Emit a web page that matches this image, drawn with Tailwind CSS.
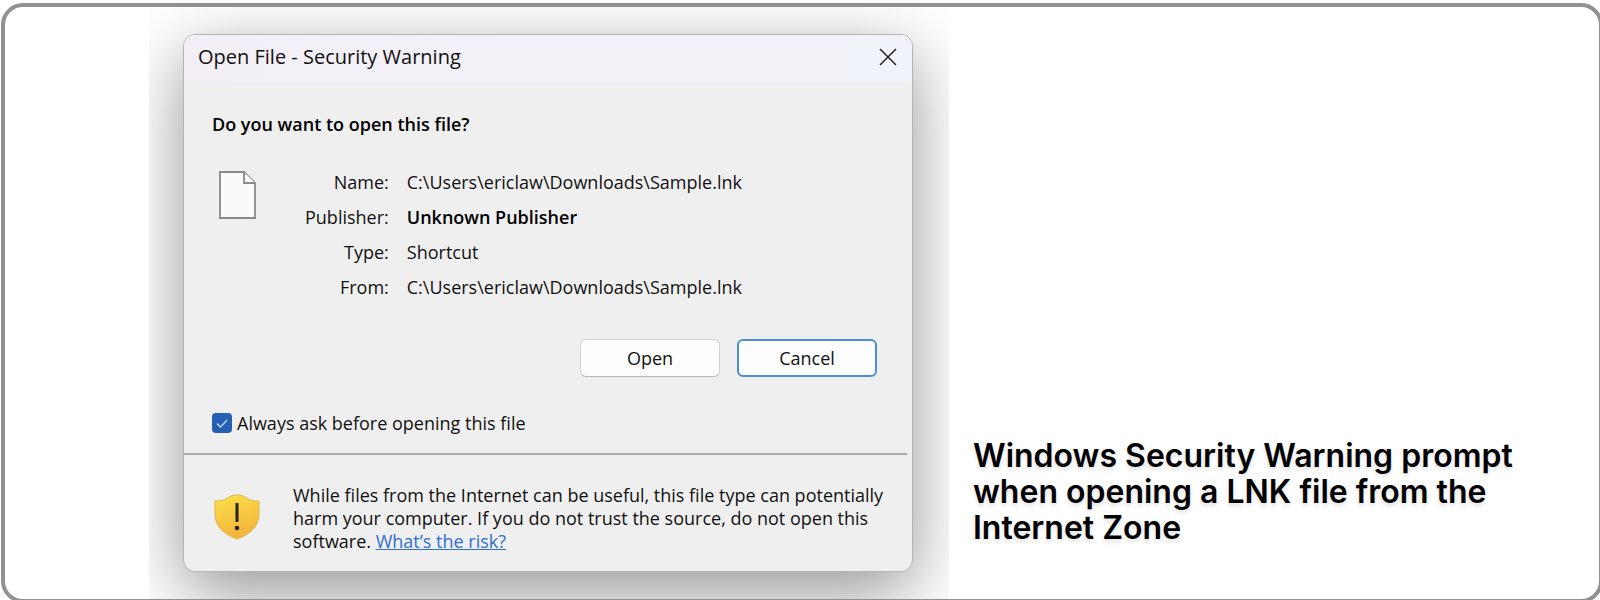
<!DOCTYPE html>
<html lang="en">

<head>
    <meta charset="UTF-8">
    <meta name="viewport" content="width=device-width, initial-scale=1.0">
    <title>Open File - Security Warning</title>
    <script src="https://cdn.jsdelivr.net/npm/@tailwindcss/browser@4"></script>
</head>

<body class="bg-white h-screen overflow-hidden pt-[3px] pl-px">
    <!-- Rounded frame, runs slightly past the right and bottom edges -->
    <figure
        class="flex h-screen -mr-[3px] pl-36 border-4 border-[#919191] rounded-[22px] overflow-hidden">

        <!-- Dialog and its shadow -->
        <div class="w-full max-w-[800px] overflow-hidden pl-[34px] pr-9 pt-[27px]">
            <section role="dialog" aria-labelledby="dialog-title"
                class="font-['Open_Sans','Noto_Sans',sans-serif] text-[18px] leading-6 text-[#111] bg-[#efefef] border border-[#b4b4b4] rounded-xl overflow-hidden shadow-[0_20px_68px_rgba(0,0,0,0.42)]">
                <header
                    class="flex items-center justify-between h-[47px] pl-3.5 pr-[15px] pb-1 bg-linear-to-r from-[#f4eff7] to-[#f0f3f9]">
                    <h1 id="dialog-title" class="text-[20px]">Open File - Security Warning</h1>
                    <button type="button" aria-label="Close">
                        <svg class="size-[18px]" viewBox="0 0 18 18" fill="none" stroke="#222" stroke-width="1.5">
                            <path d="M1 1l16 16M17 1L1 17" />
                        </svg>
                    </button>
                </header>

                <div class="pl-7 pr-[35px] pt-[30px] pb-[18px]">
                    <h2 class="font-semibold text-black">Do you want to open this file?</h2>

                    <div class="flex pt-7">
                        <svg class="w-[37px] h-12 ml-[7px] mt-[7px] shrink-0" viewBox="0 0 37 48" fill="#fafafa" stroke="#8a8a86"
                            stroke-width="1.8">
                            <path d="M1 1h24l11 11v35H1z" />
                            <path d="M25 1v11h11" />
                        </svg>
                        <table class="ml-[49px]">
                            <tbody>
                                <tr class="h-[35px]">
                                    <th scope="row" class="font-normal text-right pr-[18px]">Name:</th>
                                    <td>C:\Users\ericlaw\Downloads\Sample.lnk</td>
                                </tr>
                                <tr class="h-[35px]">
                                    <th scope="row" class="font-normal text-right pr-[18px]">Publisher:</th>
                                    <td class="font-semibold text-black">Unknown Publisher</td>
                                </tr>
                                <tr class="h-[35px]">
                                    <th scope="row" class="font-normal text-right pr-[18px]">Type:</th>
                                    <td>Shortcut</td>
                                </tr>
                                <tr class="h-[35px]">
                                    <th scope="row" class="font-normal text-right pr-[18px]">From:</th>
                                    <td>C:\Users\ericlaw\Downloads\Sample.lnk</td>
                                </tr>
                            </tbody>
                        </table>
                    </div>

                    <div class="flex justify-end gap-[17px] pt-[35px]">
                        <button type="button"
                            class="w-[140px] h-[38px] bg-[#fdfdfd] border border-[#d2d2d2] border-b-[#b8b8b8] rounded-md">Open</button>
                        <button type="button"
                            class="w-[140px] h-[38px] bg-[#fdfdfd] border-2 border-[#4a90d9] rounded-md">Cancel</button>
                    </div>

                    <label class="flex items-center gap-[5px] pt-[34px]">
                        <span class="grid shrink-0">
                            <input type="checkbox" checked
                                class="appearance-none col-start-1 row-start-1 size-5 rounded-[4px] bg-[#2560b4]">
                            <svg class="col-start-1 row-start-1 size-5 pointer-events-none" viewBox="0 0 20 20" fill="none"
                                stroke="#c8daf2" stroke-width="1.3">
                                <path d="M5 10.5l3.5 3.5L15 7" />
                            </svg>
                        </span>
                        Always ask before opening this file
                    </label>
                </div>

                <hr class="border-t-2 border-[#ababab] mr-[5px]">

                <footer class="flex items-start pl-[30px] pr-6 pt-[29px] pb-[18px]">
                    <svg class="size-[46px] mt-[10px] shrink-0" viewBox="0 0 46 46">
                        <defs>
                            <linearGradient id="shield" x1="0" y1="0" x2="0.3" y2="1">
                                <stop offset="0" stop-color="#fbe14a" />
                                <stop offset="1" stop-color="#f3b53c" />
                            </linearGradient>
                        </defs>
                        <path fill="url(#shield)" stroke="#e0b440"
                            d="M23 1c5 0 7.500 1.500 10 3.500C36 6.500 40 7 45 7v12c0 14-9 21-22 26C10 40 1 33 1 19V7c5 0 9-.5 12-2.500C15.500 2.500 18 1 23 1z" />
                        <path stroke="#222" stroke-width="3" d="M23 9v19" />
                        <circle cx="23" cy="34" r="2.300" fill="#222" />
                    </svg>
                    <p class="pl-[33px] leading-[23px]">While files from the Internet can be useful, this file type can
                        potentially<br>harm your computer. If you do not trust the source, do not open this<br>software. <a
                            href="#" class="text-[#2f6fd0] underline">What’s the risk?</a></p>
                </footer>
            </section>
        </div>

        <figcaption
            class="self-end w-[580px] shrink-0 pl-6 pb-[53px] font-[Inter,sans-serif] font-semibold text-[32px] leading-9 text-black text-shadow-[0_3px_4px_rgba(0,0,0,0.12)]">
            Windows Security Warning prompt when opening a LNK file from the Internet Zone
        </figcaption>
    </figure>
</body>

</html>
